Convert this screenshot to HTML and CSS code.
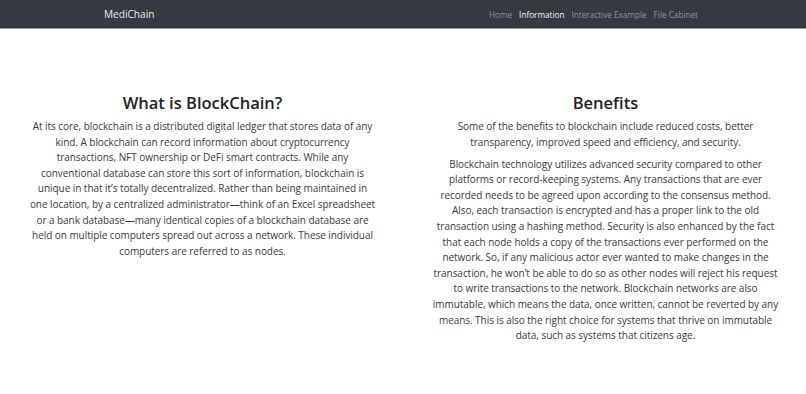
FILE: index.html
```html
<!DOCTYPE html>
<html lang="en">
<head>
<meta charset="utf-8">
<title>MediChain</title>
<link rel="stylesheet" href="styles.css">
</head>
<body>
<header class="navbar">
  <div class="nav-inner">
    <a class="brand" href="#">MediChain</a>
    <nav class="links">
      <a href="#">Home</a>
      <a class="active" href="#">Information</a>
      <a href="#">Interactive Example</a>
      <a href="#">File Cabinet</a>
    </nav>
  </div>
</header>
<main class="content">
  <section class="col col-left">
    <h2>What is BlockChain?</h2>
    <p>At its core, blockchain is a distributed digital ledger that stores data of any kind. A blockchain can record information about cryptocurrency transactions, NFT ownership or DeFi smart contracts. While any conventional database can store this sort of information, blockchain is unique in that it’s totally decentralized. Rather than being maintained in one location, by a centralized administrator—think of an Excel spreadsheet or a bank database—many identical copies of a blockchain database are held on multiple computers spread out across a network. These individual computers are referred to as nodes.</p>
  </section>
  <section class="col col-right">
    <h2>Benefits</h2>
    <p>Some of the benefits to blockchain include reduced costs, better transparency, improved speed and efficiency, and security.</p>
    <p>Blockchain technology utilizes advanced security compared to other platforms or record-keeping systems. Any transactions that are ever recorded needs to be agreed upon according to the consensus method. Also, each transaction is encrypted and has a proper link to the old transaction using a hashing method. Security is also enhanced by the fact that each node holds a copy of the transactions ever performed on the network. So, if any malicious actor ever wanted to make changes in the transaction, he won’t be able to do so as other nodes will reject his request to write transactions to the network. Blockchain networks are also immutable, which means the data, once written, cannot be reverted by any means. This is also the right choice for systems that thrive on immutable data, such as systems that citizens age.</p>
  </section>
</main>
</body>
</html>
```
FILE: styles.css
```css
* { box-sizing: border-box; }
html, body { margin: 0; padding: 0; background: #fff; }
body {
  font-family: "Open Sans", "Noto Sans", sans-serif;
  color: #3a3a3a;
}
.navbar {
  height: 29px;
  background: #343a40;
  border-bottom: 1px solid #9a9ea2;
}
.nav-inner {
  height: 28px;
  margin: 0 auto;
  width: 612px;
  display: flex;
  align-items: center;
  justify-content: space-between;
}
.brand {
  color: #e8e9ea;
  text-decoration: none;
  font-size: 10.1px;
  margin-left: 7px;
}
.links { display: flex; gap: 7px; margin-right: 11px; }
.links a {
  color: #8d9196;
  text-decoration: none;
  font-size: 8.2px;
}
.links a.active { color: #f2f2f2; }
.content {
  display: flex;
  padding-top: 63px;
}
.col {
  flex: 1 1 0;
  text-align: center;
}
.col-left { padding: 0 28px; }
.col-right { padding: 0 26px; }
h2 {
  margin: 0 0 5px;
  font-size: 16.5px;
  font-weight: 600;
  line-height: 22px;
  color: #222;
}
p {
  margin: 0 0 6.5px;
  font-size: 10px;
  line-height: 15.6px;
  letter-spacing: -0.05px;
}
```
